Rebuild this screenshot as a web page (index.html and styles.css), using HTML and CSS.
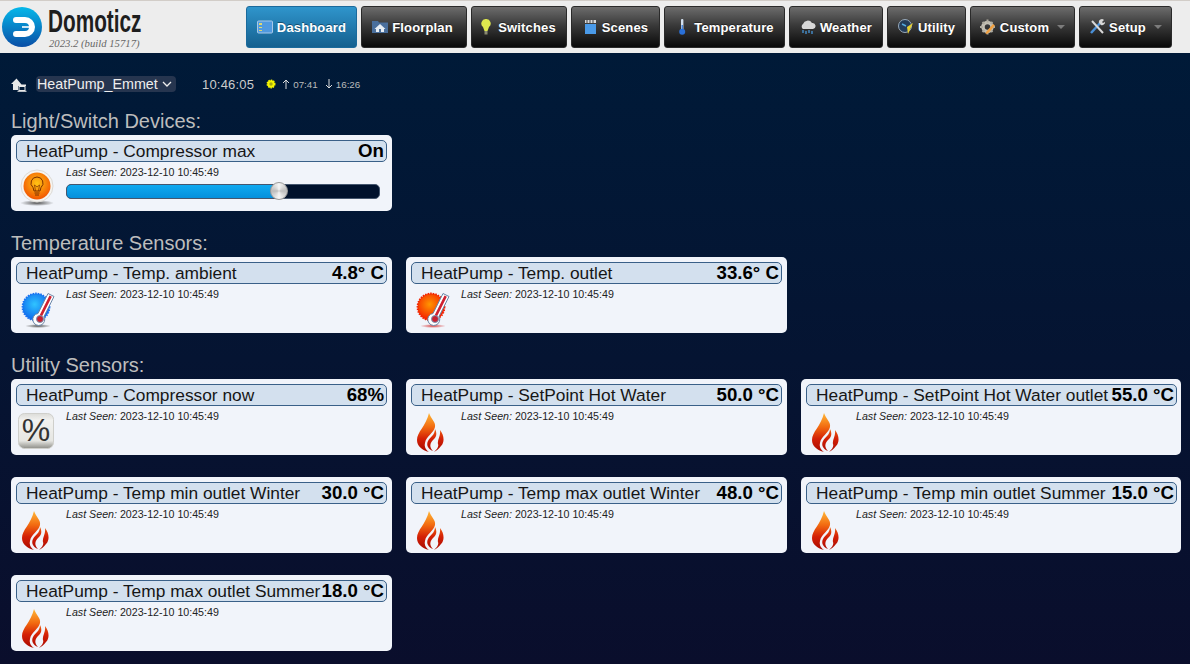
FILE: index.html
```html
<!DOCTYPE html>
<html lang="en">
<head>
<meta charset="utf-8">
<title>Domoticz</title>
<link rel="stylesheet" href="styles.css">
</head>
<body>
<svg class="defs" width="0" height="0" aria-hidden="true">
  <defs>
    <linearGradient id="fl" gradientUnits="userSpaceOnUse" x1="0" y1="0" x2="0" y2="39"><stop offset="0" stop-color="#ffb838"/><stop offset=".36" stop-color="#f26a10"/><stop offset=".66" stop-color="#d42006"/><stop offset="1" stop-color="#a80a00"/></linearGradient>
    <radialGradient id="cold" cx=".45" cy=".4" r=".6"><stop offset="0" stop-color="#30c4ff"/><stop offset="1" stop-color="#0c66ec"/></radialGradient>
    <radialGradient id="hot" cx=".45" cy=".4" r=".6"><stop offset="0" stop-color="#ff9600"/><stop offset="1" stop-color="#f41c00"/></radialGradient>
    <radialGradient id="lamp" cx=".5" cy=".4" r=".6"><stop offset="0" stop-color="#ffc414"/><stop offset="1" stop-color="#f25400"/></radialGradient>
    <radialGradient id="shadow"><stop offset="0" stop-color="#555"/><stop offset="1" stop-color="#555" stop-opacity="0"/></radialGradient>
    <radialGradient id="shadowr"><stop offset="0" stop-color="#d84040"/><stop offset="1" stop-color="#d84040" stop-opacity="0"/></radialGradient>
    <linearGradient id="key" x1="0" y1="0" x2="0" y2="1"><stop offset="0" stop-color="#dcdcd8"/><stop offset=".2" stop-color="#f2f2f0"/><stop offset=".78" stop-color="#e6e6e2"/><stop offset="1" stop-color="#8e8e88"/></linearGradient>
    <linearGradient id="logoG" x1="0" y1="0" x2="0" y2="1"><stop offset="0" stop-color="#05b8ea"/><stop offset="1" stop-color="#0a4ea6"/></linearGradient>
    <symbol id="flame" viewBox="0 0 27 39">
      <path fill="url(#fl)" d="M12 0C14 6 19 9 18 14 17 20 9 23 8 30 7 34 9 37 12 39 5 37 0 33 0 27 0 19 9 13 12 0Z"/>
      <path fill="url(#fl)" d="M18 16C20 20 20 24 16 27 13 30 12 34 16 38 11 36 9 32 11 28 13 24 18 22 18 16Z"/>
      <path fill="url(#fl)" d="M23 17C27 22 28 29 24 33 22 36 19 38 17 39 20 36 22 34 21 31 20 27 24 23 23 17Z"/>
    </symbol>
    <symbol id="thermo" viewBox="0 0 36 38">
      <path fill="#fff" d="M28 2.500l6 3-10 20a6 6 0 1 1-6-3z" stroke="#6a86a8" stroke-width="1"/>
      <path fill="#d02030" d="M29.500 4.500l2.300 1.200-10 20-2.300-1.200z"/>
      <circle cx="20" cy="28" r="3.500" fill="#c82030" stroke="#7a98b8" stroke-width="1"/>
    </symbol>
  </defs>
</svg>

<header class="topbar">
  <div class="brand">
    <svg class="brand-mark" viewBox="0 0 40 40"><circle cx="20" cy="20" r="20" fill="url(#logoG)"/><path d="M14 13H23A7 7 0 0 1 23 27H14" fill="none" stroke="#fff" stroke-width="6" stroke-linecap="round"/><path d="M20 20H27" stroke="#fff" stroke-width="1.600"/></svg>
    <div class="brand-text">
      <div class="brand-name">Domoticz</div>
      <div class="brand-ver">2023.2 (build 15717)</div>
    </div>
  </div>
  <nav class="nav">
    <a class="btn btn-active w-dash"><svg class="ico" viewBox="0 0 16 16"><rect x=".5" y="2" width="15" height="12" rx="1" fill="#4f9ae0" stroke="#a8c8e8"/><path d="M2 4h3v2H2zM2 8h3v1H2zM2 11h3v1H2z" fill="#e0d870"/></svg>Dashboard</a>
    <a class="btn w-floor"><svg class="ico" viewBox="0 0 16 16"><path d="M0 2h6l1 1.500h9V14H0z" fill="#4a6f9c"/><path d="M8 5l5.500 5H12v3H4v-3H2.500z" fill="#e8eef4"/><path d="M7 10h2v3H7z" fill="#4a6f9c"/></svg>Floorplan</a>
    <a class="btn w-switch"><svg class="ico" viewBox="0 0 16 16"><path d="M8 0a4.500 4.500 0 0 1 3 8l-1.500 4h-3L5 8a4.500 4.500 0 0 1 3-8z" fill="#dfe84e"/><rect x="6.500" y="12" width="3" height="3.500" fill="#8a8a70"/></svg>Switches</a>
    <a class="btn w-scene"><svg class="ico" viewBox="0 0 16 16"><rect x="3" y="5" width="11" height="10" fill="#4a9ae8"/><path d="M3 1h11v3H3z" fill="#d8d8d8"/><path d="M5 1v3M8 1v3M11 1v3" stroke="#444"/></svg>Scenes</a>
    <a class="btn w-temp"><svg class="ico" viewBox="0 0 16 16"><rect x="7" y="0" width="2.400" height="11" rx="1" fill="#d4e2f0"/><circle cx="8.200" cy="12.800" r="3" fill="#2a70d8"/><rect x="7.600" y="6" width="1.200" height="6" fill="#2a70d8"/></svg>Temperature</a>
    <a class="btn w-weather"><svg class="ico" viewBox="0 0 16 16"><path d="M3 10a3 3 0 0 1 0-5 5 5 0 0 1 9-1 3 3 0 0 1 1 6z" fill="#d8d8d8"/><path d="M3 11v3M6 12v3M9 11v3M12 12v3" stroke="#4aa0e8" stroke-width="1.200"/></svg>Weather</a>
    <a class="btn w-util"><svg class="ico" viewBox="0 0 16 16"><circle cx="7" cy="7" r="6.500" fill="#243c58" stroke="#9ab"/><path d="M9 8l6-4-5 11z" fill="#e8d030"/><path d="M4 5l4 2" stroke="#5ad" stroke-width="1.500"/></svg>Utility</a>
    <a class="btn w-custom"><svg class="ico" viewBox="0 0 16 16"><circle cx="7.500" cy="8" r="4.500" fill="none" stroke="#c4c0b4" stroke-width="3.500"/><path d="M7.500 .5v3M7.500 12.500v3M0 8h3M12 8h3M2.500 3l2 2M10.500 11l2 2M12.500 3l-2 2M4.500 11l-2 2" stroke="#b0aca0" stroke-width="2"/><path d="M6 13l7-8 2 1.500-7 8-2.500.5z" fill="#f0a040"/></svg>Custom<span class="caret"></span></a>
    <a class="btn w-setup"><svg class="ico" viewBox="0 0 16 16"><path d="M2 14L12 3" stroke="#4a90d8" stroke-width="2.500"/><path d="M3 2l11 12" stroke="#d8d8d8" stroke-width="2"/><path d="M10 4a3 3 0 0 1 5-3l-2 2 1 1 2-1a3 3 0 0 1-4 3z" fill="#d8d8d8"/></svg>Setup<span class="caret"></span></a>
  </nav>
</header>

<main class="page">
  <div class="statusrow">
    <svg class="homeico" viewBox="0 0 16 14"><path d="M5.500 .5L0 6h2v6h5V8h8V6.500H10.500z" fill="#e8e8e8"/><rect x="8" y="8.500" width="6" height="4" fill="#001a38" stroke="#e8e8e8"/><path d="M6.500 13.300h9" stroke="#e8e8e8"/></svg>
    <div class="roomsel"><span class="roomname">HeatPump_Emmet</span><svg class="chev" viewBox="0 0 10 6"><path d="M1 1l4 4 4-4" fill="none" stroke="#eee" stroke-width="1.300"/></svg></div>
    <span class="clock">10:46:05</span>
    <svg class="sun" viewBox="0 0 10 10"><circle cx="5" cy="5" r="3.700" fill="#f5f500" stroke="#f5f500" stroke-width="1.600" stroke-dasharray="1.400 1"/><circle cx="5" cy="5" r="1.700" fill="#a8a810"/></svg>
    <svg class="arrow" viewBox="0 0 8 10"><path d="M4 10V1M1 4l3-3 3 3" fill="none" stroke="#ddd" stroke-width="1"/></svg>
    <span class="suntime">07:41</span>
    <svg class="arrow arrow-down" viewBox="0 0 8 10"><path d="M4 0v9M1 6l3 3 3-3" fill="none" stroke="#ddd" stroke-width="1"/></svg>
    <span class="suntime">16:26</span>
  </div>

  <h2 class="sect sect-first">Light/Switch Devices:</h2>
  <section class="grid">
    <article class="card">
      <div class="title"><span class="name">HeatPump - Compressor max</span><span class="val">On</span></div>
      <div class="body">
        <svg class="icon" viewBox="0 0 36 38"><ellipse cx="18" cy="35" rx="17" ry="3" fill="url(#shadow)"/><circle cx="18" cy="18" r="16" fill="#f6f4f0" stroke="#dcdad6"/><circle cx="18" cy="18" r="13.500" fill="url(#lamp)"/><path d="M18 9a6 6 0 0 1 4 10.500L21 23h-6l-1-3.500A6 6 0 0 1 18 9zM15.500 25h5M16 27h4" fill="none" stroke="#7a3000" stroke-width="1"/><path d="M16.500 23l-1-6 2.500 2 2.500-2-1 6" fill="none" stroke="#7a3000" stroke-width=".7"/></svg>
        <div class="info">
          <div class="seen"><em>Last Seen:</em> 2023-12-10 10:45:49</div>
          <div class="slider"><div class="fill" style="width:68%"></div><div class="knob" style="left:68%"></div></div>
        </div>
      </div>
    </article>
  </section>

  <h2 class="sect">Temperature Sensors:</h2>
  <section class="grid">
    <article class="card">
      <div class="title"><span class="name">HeatPump - Temp. ambient</span><span class="val">4.8° C</span></div>
      <div class="body">
        <svg class="icon icon-temp" viewBox="0 0 36 38"><ellipse cx="18" cy="35" rx="13" ry="2" fill="url(#shadow)"/><circle cx="16" cy="16" r="13.500" fill="url(#cold)" stroke="#1a70f0" stroke-width="1.800" stroke-dasharray="1.500 1.100"/><use href="#thermo" width="36" height="38"/></svg>
        <div class="info"><div class="seen"><em>Last Seen:</em> 2023-12-10 10:45:49</div></div>
      </div>
    </article>
    <article class="card">
      <div class="title"><span class="name">HeatPump - Temp. outlet</span><span class="val">33.6° C</span></div>
      <div class="body">
        <svg class="icon icon-temp" viewBox="0 0 36 38"><ellipse cx="18" cy="35" rx="13" ry="2" fill="url(#shadowr)"/><circle cx="16" cy="16" r="13.500" fill="url(#hot)" stroke="#f02000" stroke-width="1.800" stroke-dasharray="1.500 1.100"/><use href="#thermo" width="36" height="38"/></svg>
        <div class="info"><div class="seen"><em>Last Seen:</em> 2023-12-10 10:45:49</div></div>
      </div>
    </article>
  </section>

  <h2 class="sect">Utility Sensors:</h2>
  <section class="grid">
    <article class="card">
      <div class="title"><span class="name">HeatPump - Compressor now</span><span class="val">68%</span></div>
      <div class="body">
        <svg class="icon icon-key" viewBox="0 0 36 38"><rect x=".5" y=".5" width="35" height="35" rx="6" fill="url(#key)" stroke="#cfcfcb"/><text x="18" y="28" text-anchor="middle" class="pct">%</text></svg>
        <div class="info"><div class="seen"><em>Last Seen:</em> 2023-12-10 10:45:49</div></div>
      </div>
    </article>
    <article class="card">
      <div class="title"><span class="name">HeatPump - SetPoint Hot Water</span><span class="val">50.0 °C</span></div>
      <div class="body"><svg class="icon icon-flame"><use href="#flame"/></svg><div class="info"><div class="seen"><em>Last Seen:</em> 2023-12-10 10:45:49</div></div></div>
    </article>
    <article class="card">
      <div class="title"><span class="name">HeatPump - SetPoint Hot Water outlet</span><span class="val">55.0 °C</span></div>
      <div class="body"><svg class="icon icon-flame"><use href="#flame"/></svg><div class="info"><div class="seen"><em>Last Seen:</em> 2023-12-10 10:45:49</div></div></div>
    </article>
    <article class="card">
      <div class="title"><span class="name">HeatPump - Temp min outlet Winter</span><span class="val">30.0 °C</span></div>
      <div class="body"><svg class="icon icon-flame"><use href="#flame"/></svg><div class="info"><div class="seen"><em>Last Seen:</em> 2023-12-10 10:45:49</div></div></div>
    </article>
    <article class="card">
      <div class="title"><span class="name">HeatPump - Temp max outlet Winter</span><span class="val">48.0 °C</span></div>
      <div class="body"><svg class="icon icon-flame"><use href="#flame"/></svg><div class="info"><div class="seen"><em>Last Seen:</em> 2023-12-10 10:45:49</div></div></div>
    </article>
    <article class="card">
      <div class="title"><span class="name">HeatPump - Temp min outlet Summer</span><span class="val">15.0 °C</span></div>
      <div class="body"><svg class="icon icon-flame"><use href="#flame"/></svg><div class="info"><div class="seen"><em>Last Seen:</em> 2023-12-10 10:45:49</div></div></div>
    </article>
    <article class="card">
      <div class="title"><span class="name">HeatPump - Temp max outlet Summer</span><span class="val">18.0 °C</span></div>
      <div class="body"><svg class="icon icon-flame"><use href="#flame"/></svg><div class="info"><div class="seen"><em>Last Seen:</em> 2023-12-10 10:45:49</div></div></div>
    </article>
  </section>
</main>
</body>
</html>
```
FILE: styles.css
```css
* { box-sizing: border-box; }
html, body { margin: 0; height: 664px; overflow: hidden; }
body {
  font-family: "Liberation Sans", Arial, sans-serif;
  background: linear-gradient(180deg, #001a38 53px, #0a0e2c 664px);
  color: #ddd;
}
.defs { display: block; height: 0; }

.topbar {
  height: 53px;
  display: flex;
  background: #ededed;
  border-top: 1px solid #d2cdc8;
}
.brand { width: 246px; padding: 6px 0 0 2px; display: flex; gap: 6px; }
.brand-mark { width: 40px; height: 40px; flex: none; }
.brand-text { line-height: 1; padding-top: 1px; }
.brand-name {
  width: 132px;
  font-size: 31px;
  line-height: 28px;
  color: #1e1e1e;
  font-weight: 700;
  transform: scaleX(.67);
  transform-origin: left;
  white-space: nowrap;
}
.brand-ver {
  font-family: "Liberation Serif", serif;
  font-style: italic;
  font-size: 10.700px;
  color: #666;
  margin: 2px 0 0 1px;
  white-space: nowrap;
}

.nav { display: flex; gap: 4px; padding-top: 5px; height: 48px; }
.btn {
  display: flex;
  align-items: center;
  justify-content: center;
  gap: 4px;
  height: 42px;
  border: 1px solid #2a2a2a;
  border-radius: 3px;
  background: linear-gradient(180deg, #6c6c6c 0%, #3a3a3a 45%, #090909 100%);
  color: #fff;
  font-size: 13px;
  font-weight: 700;
  letter-spacing: .15px;
  text-shadow: 0 -1px 0 rgba(0,0,0,.4);
  white-space: nowrap;
}
.btn-active {
  background: linear-gradient(180deg, #2f95cc 0%, #15608f 100%);
  border-color: #1a6a9c;
}
.ico { width: 16px; height: 16px; flex: none; }
.caret {
  width: 0; height: 0;
  margin-left: 4px;
  border-left: 4px solid transparent;
  border-right: 4px solid transparent;
  border-top: 4px solid #7c7c7c;
}
.w-dash { width: 111px; }
.w-floor { width: 106px; padding-right: 3px; }
.w-switch { width: 96px; padding-right: 4px; }
.w-scene { width: 89px; padding-right: 1px; }
.w-temp { width: 121px; padding-right: 1px; }
.w-weather { width: 94px; }
.w-util { width: 79px; }
.w-custom { width: 105px; }
.w-setup { width: 93px; }

.page { padding: 23px 0 0 11px; }

.statusrow { display: flex; align-items: center; height: 16px; }
.homeico { width: 16px; height: 14px; flex: none; margin-top: 2px; }
.roomsel {
  display: flex; align-items: center;
  width: 140px; height: 16px;
  margin-left: 9px;
  padding-left: 1px;
  background: #26354f;
  border-radius: 4px;
}
.roomname {
  width: 122px;
  overflow: hidden;
  font-size: 14.300px;
  color: #eee;
  white-space: nowrap;
}
.chev { width: 10px; height: 6px; margin-left: 3px; }
.clock { margin-left: 26px; font-size: 13px; color: #ccc; letter-spacing: .2px; }
.sun { width: 10px; height: 10px; margin-left: 12px; }
.arrow { width: 8px; height: 10px; margin-left: 6px; }
.arrow-down { margin-left: 7px; }
.suntime { font-size: 9.800px; color: #bbb; margin-left: 3px; }

.sect {
  margin: 21px 0 3px;
  height: 22px;
  font-size: 20px;
  line-height: 22px;
  font-weight: 400;
  color: #bdbdbd;
}
.sect-first { margin-top: 18px; }
.grid { display: grid; grid-template-columns: 381px 381px 380px; gap: 22px 14px; }

.card {
  height: 76px;
  background: #f1f4fa;
  border-radius: 5px;
  padding: 5px;
}
.card:nth-child(3n) { padding-right: 4px; }
.title {
  display: flex;
  justify-content: space-between;
  align-items: center;
  height: 22px;
  padding: 0 2px 0 9px;
  background: #d3e0ee;
  border: 1px solid #3a6088;
  border-radius: 5px;
  color: #161616;
  white-space: nowrap;
}
.name { font-size: 17.330px; }
.val { font-size: 18.670px; font-weight: 700; color: #000; }
.body { display: flex; }
.icon { width: 36px; height: 38px; margin: 6px 0 0 3px; flex: none; }
.icon-temp { margin: 7px -1px 0 4px; }
.icon-key { margin: 7px 1px 0 2px; }
.icon-flame { width: 27px; height: 39px; margin: 7px 6px 0 6px; flex: none; }
.info { flex: 1; margin-left: 11px; padding-right: 2px; }
.seen { font-size: 10.670px; line-height: 12px; margin-top: 4px; color: #222; }
.seen em { font-style: italic; }
.pct { font-family: "Liberation Sans", sans-serif; font-size: 32px; fill: #333; }

.slider {
  position: relative;
  height: 15px;
  margin: 6px 0 0;
  width: 314px;
  background: #00112c;
  border: 1px solid #45566e;
  border-radius: 5px;
}
.fill { height: 100%; background: linear-gradient(180deg, #0fa9f0, #0590dc); border-radius: 4px 0 0 4px; }
.knob {
  position: absolute;
  top: -3px;
  width: 18px; height: 18px;
  margin-left: -9px;
  border-radius: 50%;
  background: conic-gradient(#f6f6f6, #bcbcbc, #f6f6f6, #bcbcbc, #f6f6f6);
  border: 1px solid #9a9a9a;
}
```
